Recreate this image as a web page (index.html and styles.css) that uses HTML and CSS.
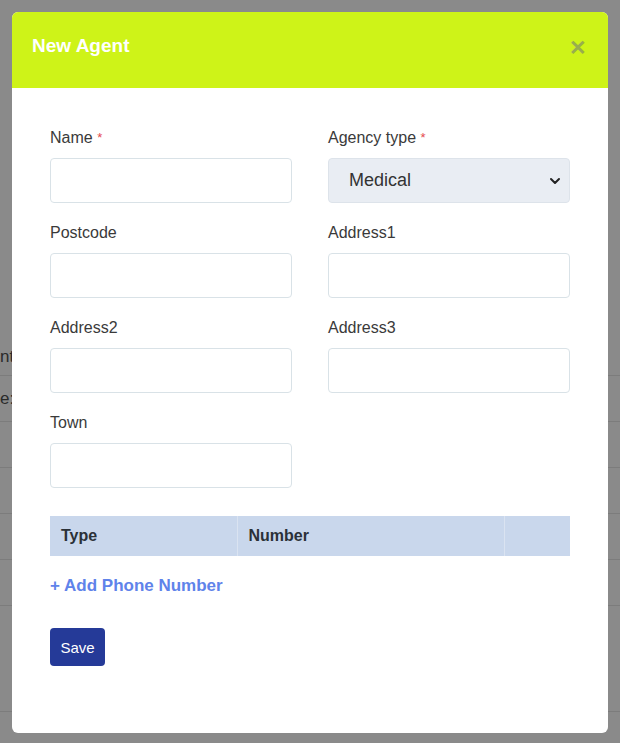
FILE: index.html
```html
<!DOCTYPE html>
<html lang="en">
<head>
    <meta charset="UTF-8">
    <meta name="viewport" content="width=device-width, initial-scale=1.0">
    <title>New Agent</title>
    <link rel="stylesheet" href="styles.css">
</head>
<body>
    <!-- page behind the overlay -->
    <div class="page">
        <div class="page-row page-row-top"><span class="page-text">nt details</span></div>
        <div class="page-row"><span class="page-text">e: Agent</span></div>
        <div class="page-row"></div>
        <div class="page-row"></div>
        <div class="page-row"></div>
        <div class="page-row"></div>
        <div class="page-row page-row-tall"></div>
    </div>

    <div class="modal">
        <div class="modal-header">
            <h2>New Agent</h2>
            <span class="close">&#x2715;</span>
        </div>
        <div class="modal-body">
            <div class="form-grid">
                <div class="field">
                    <label>Name <span class="req">*</span></label>
                    <input type="text">
                </div>
                <div class="field">
                    <label>Agency type <span class="req">*</span></label>
                    <div class="select">
                        <span>Medical</span>
                        <svg width="12" height="8" viewBox="0 0 12 8"><path d="M2 2l4 4 4-4" fill="none" stroke="#222" stroke-width="2" stroke-linecap="round" stroke-linejoin="round"/></svg>
                    </div>
                </div>
                <div class="field">
                    <label>Postcode</label>
                    <input type="text">
                </div>
                <div class="field">
                    <label>Address1</label>
                    <input type="text">
                </div>
                <div class="field">
                    <label>Address2</label>
                    <input type="text">
                </div>
                <div class="field">
                    <label>Address3</label>
                    <input type="text">
                </div>
                <div class="field">
                    <label>Town</label>
                    <input type="text">
                </div>
            </div>

            <table class="phones">
                <thead>
                    <tr>
                        <th class="col-type">Type</th>
                        <th class="col-number">Number</th>
                        <th></th>
                    </tr>
                </thead>
            </table>

            <a class="add-phone">+ Add Phone Number</a>

            <button class="save">Save</button>
        </div>
    </div>
</body>
</html>
```

FILE: styles.css
```css
* {
    box-sizing: border-box;
}
body {
    margin: 0;
    background: #8a8a8a;
    font-family: "Liberation Sans", Arial, sans-serif;
    height: 743px;
    overflow: hidden;
    position: relative;
}
.page {
    padding-top: 338px;
}
.page-row {
    height: 46px;
    border-bottom: 1px solid #7c7c7c;
    display: flex;
    align-items: center;
}
.page-row-top {
    height: 38px;
}
.page-row-tall {
    height: 106px;
}
.page-text {
    color: #2a2a2a;
    font-size: 17px;
}
.modal {
    position: absolute;
    top: 12px;
    left: 12px;
    width: 596px;
    height: 721px;
    background: #fff;
    border-radius: 6px;
    overflow: hidden;
}
.modal-header {
    height: 76px;
    background: #cef318;
    display: flex;
    align-items: center;
    justify-content: space-between;
    padding: 0 21px 0 20px;
}
.modal-header h2 {
    margin: 0;
    color: #fff;
    font-size: 19px;
    font-weight: bold;
    position: relative;
    top: -4px;
}
.close {
    color: #98ad4e;
    font-size: 21px;
    font-weight: bold;
    position: relative;
    top: -2px;
}
.modal-body {
    padding: 40px 38px 0;
}
.form-grid {
    display: grid;
    grid-template-columns: 242px 242px;
    column-gap: 36px;
    row-gap: 20px;
}
.field label {
    display: block;
    height: 20px;
    line-height: 20px;
    font-size: 16px;
    color: #3a3a3a;
    margin-bottom: 10px;
}
.req {
    color: #e5484d;
    font-size: 13px;
    vertical-align: top;
}
.field input {
    display: block;
    width: 100%;
    height: 45px;
    border: 1px solid #d9e2e7;
    border-radius: 4px;
    background: #fff;
}
.select {
    height: 45px;
    border: 1px solid #dde3ea;
    border-radius: 4px;
    background: #e9edf3;
    display: flex;
    align-items: center;
    justify-content: space-between;
    padding: 0 8px 0 20px;
    font-size: 18px;
    color: #333;
}
.phones {
    width: 100%;
    border-collapse: collapse;
    margin-top: 28px;
}
.phones th {
    height: 40px;
    background: #c9d7ec;
    text-align: left;
    padding: 0 11px;
    font-size: 16px;
    color: #2b3138;
    border-right: 1px solid #dae3f1;
}
.phones th:last-child {
    border-right: none;
}
.col-type {
    width: 187px;
}
.col-number {
    width: 267px;
}
.add-phone {
    display: block;
    margin-top: 20px;
    color: #5f83ea;
    font-weight: bold;
    font-size: 17px;
    line-height: 20px;
}
.save {
    display: block;
    margin-top: 32px;
    width: 55px;
    height: 38px;
    background: #253a98;
    color: #fff;
    border: none;
    border-radius: 4px;
    font-family: "Liberation Sans", Arial, sans-serif;
    font-size: 15px;
    padding: 0;
}
```
